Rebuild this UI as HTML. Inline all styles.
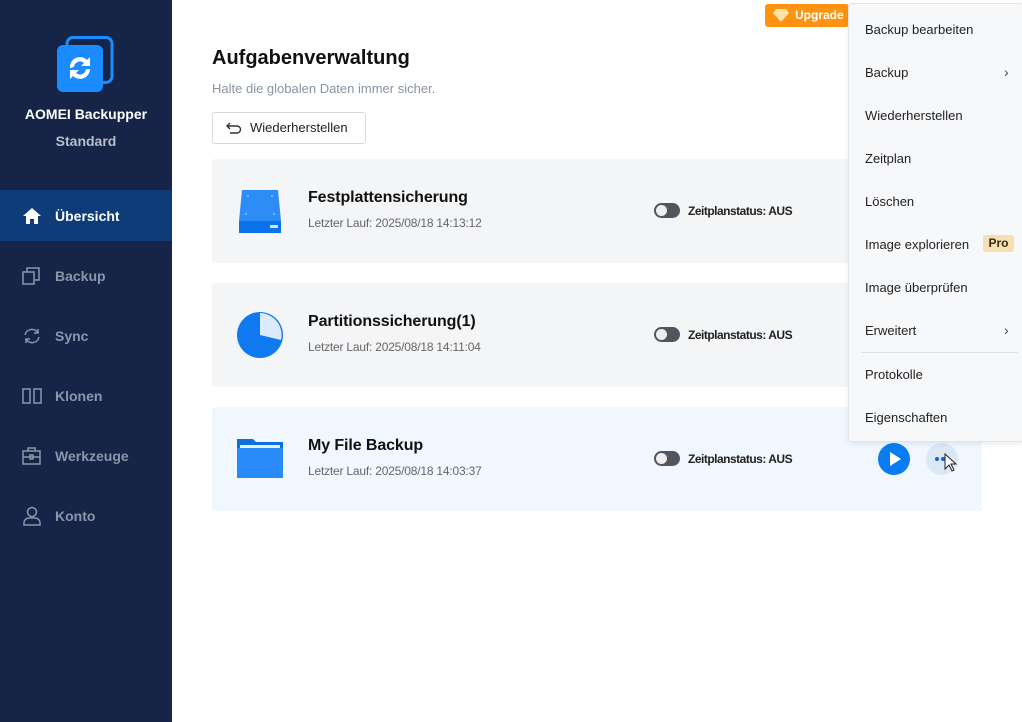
<!DOCTYPE html>
<html><head><meta charset="utf-8"><style>
*{margin:0;padding:0;box-sizing:border-box}
body{width:1022px;height:722px;overflow:hidden;background:#fff;font-family:"Liberation Sans",sans-serif;position:relative}
.side{position:absolute;left:0;top:0;width:172px;height:722px;background:#152447}
.brand{position:absolute;top:106px;width:172px;text-align:center;color:#fff;font-weight:bold;font-size:14px}
.std{position:absolute;top:133px;width:172px;text-align:center;color:#b7bfcc;font-weight:bold;font-size:14px}
.nav{position:absolute;left:0;width:172px;height:51px;color:#8a96ab;font-weight:bold;font-size:14px;display:flex;align-items:center}
.nav svg{position:absolute;left:22px}
.nav span{position:absolute;left:55px}
.nav.act{background:#0e3c78;color:#fff}
.card{position:absolute;left:212px;width:770px;height:104px;background:#f4f5f7;border-radius:3px}
.card .t{position:absolute;left:96px;top:30px;font-weight:bold;font-size:16px;color:#111;letter-spacing:-0.1px}
.card .s{position:absolute;left:96px;top:57px;font-size:12px;color:#666;letter-spacing:-0.2px}
.card .tg{position:absolute;left:442px;top:44px;width:26px;height:15px;border-radius:8px;background:#50555e}
.card .tg:after{content:"";position:absolute;left:2px;top:2px;width:11px;height:11px;border-radius:50%;background:#eee}
.card .z{position:absolute;left:476px;top:45px;font-size:12px;font-weight:bold;color:#222;letter-spacing:-0.5px}
.menu{position:absolute;left:848px;top:3px;width:176px;height:439px;background:#f7f8fa;border:1px solid #e2e4e8;border-radius:4px;box-shadow:0 2px 6px rgba(0,0,0,.08)}
.mi{position:absolute;left:16px;font-size:13px;color:#222;top:-1px}
.ch{position:absolute;left:155px;font-size:14px;color:#444}
</style></head><body>
<div class="side">
<svg style="position:absolute;left:56px;top:36px" width="58" height="58" viewBox="0 0 58 58"><rect x="11" y="1.5" width="45" height="45" rx="6" fill="none" stroke="#1a8cff" stroke-width="3"/><rect x="1" y="9" width="46" height="47" rx="6" fill="#1a8cff"/><path d="M14 32a10 10 0 0 1 17-8l3-3v9h-9l3-3a6 6 0 0 0-10 4z" fill="#fff"/><path d="M34 33a10 10 0 0 1-17 7l-3 3v-9h9l-3 3a6 6 0 0 0 10-4z" fill="#fff"/></svg>
<div class="brand">AOMEI Backupper</div><div class="std">Standard</div>
<div class="nav act" style="top:190px"><svg width="20" height="18" viewBox="0 0 20 18"><path d="M10 1L1 9h3v8h4v-5h4v5h4V9h3z" fill="#fff"/></svg><span>Übersicht</span></div>
<div class="nav" style="top:250px"><svg width="18" height="18" viewBox="0 0 18 18" fill="none" stroke="#8a96ab" stroke-width="1.5"><rect x="1" y="5" width="11" height="12"/><path d="M5 5V1h12v12h-5"/></svg><span>Backup</span></div>
<div class="nav" style="top:310px"><svg width="20" height="18" viewBox="0 0 20 18" fill="none" stroke="#8a96ab" stroke-width="1.5"><path d="M3 8a7 7 0 0 1 13-2M17 10a7 7 0 0 1-13 2"/><path d="M16 2v4h-4M4 16v-4h4"/></svg><span>Sync</span></div>
<div class="nav" style="top:370px"><svg width="20" height="18" viewBox="0 0 20 18" fill="none" stroke="#8a96ab" stroke-width="1.5"><rect x="1" y="2" width="7" height="14"/><rect x="12" y="2" width="7" height="14"/></svg><span>Klonen</span></div>
<div class="nav" style="top:430px"><svg width="20" height="18" viewBox="0 0 20 18" fill="none" stroke="#8a96ab" stroke-width="1.5"><rect x="1" y="4" width="17" height="13"/><path d="M6 4V1h7v3M1 10h17"/><rect x="8" y="8" width="3" height="4"/></svg><span>Werkzeuge</span></div>
<div class="nav" style="top:490px"><svg width="20" height="20" viewBox="0 0 20 20" fill="none" stroke="#8a96ab" stroke-width="1.5"><circle cx="10" cy="6" r="4.5"/><path d="M2 19v-2a5 5 0 0 1 5-5h6a5 5 0 0 1 5 5v2z"/></svg><span>Konto</span></div>
</div>
<div style="position:absolute;left:765px;top:4px;width:84px;height:23px;background:#ff9311;border-radius:3px;color:#fff;font-weight:bold;font-size:12px;line-height:23px;padding-left:30px">Upgrade<svg style="position:absolute;left:8px;top:5px" width="16" height="13" viewBox="0 0 16 13"><path d="M3 0h10l3 4-8 9-8-9z" fill="#ffe3a8"/></svg></div>
<div style="position:absolute;left:212px;top:47px;font-size:20px;font-weight:bold;color:#111">Aufgabenverwaltung</div>
<div style="position:absolute;left:212px;top:81px;font-size:13px;color:#8a93a3">Halte die globalen Daten immer sicher.</div>
<div style="position:absolute;left:212px;top:112px;width:154px;height:32px;border:1px solid #d5d8dd;border-radius:3px;font-size:13px;color:#222;line-height:30px;padding-left:37px">Wiederherstellen<svg style="position:absolute;left:13px;top:9px" width="16" height="12" viewBox="0 0 16 12" fill="none" stroke="#333" stroke-width="1.4"><path d="M4 1L1 4l3 3M1 4h10a3.5 3.5 0 0 1 0 7H4"/></svg></div>

<div class="card" style="top:159px"><svg style="position:absolute;left:26px;top:31px" width="44" height="43" viewBox="0 0 44 43"><path d="M4 0h36l3 31H1z" fill="#2d8cf5"/><rect x="1" y="31" width="42" height="12" fill="#0a72ea"/><rect x="32" y="35" width="8" height="3" fill="#cfe4ff"/><circle cx="10" cy="6" r="1" fill="#8fc2ff"/><circle cx="34" cy="6" r="1" fill="#8fc2ff"/><circle cx="8" cy="24" r="1" fill="#8fc2ff"/><circle cx="36" cy="24" r="1" fill="#8fc2ff"/></svg>
<div class="t">Festplattensicherung</div><div class="s">Letzter Lauf: 2025/08/18 14:13:12</div><div class="tg"></div><div class="z">Zeitplanstatus: AUS</div></div>
<div class="card" style="top:283px"><svg style="position:absolute;left:24px;top:28px" width="48" height="48" viewBox="0 0 48 48"><circle cx="24" cy="24" r="23" fill="#0f7af0"/><path d="M24 2a22 22 0 0 1 21 27L24 24z" fill="#dcebfb"/></svg>
<div class="t">Partitionssicherung(1)</div><div class="s">Letzter Lauf: 2025/08/18 14:11:04</div><div class="tg"></div><div class="z">Zeitplanstatus: AUS</div></div>
<div class="card" style="top:407px;background:#f0f7ff"><svg style="position:absolute;left:25px;top:32px" width="46" height="39" viewBox="0 0 46 39"><path d="M0 0h16l3 3h27v36H0z" fill="#0f6fe0"/><rect x="3" y="6" width="40" height="3" fill="#e5f0fd"/><rect x="0" y="9" width="46" height="30" fill="#2a8bf8"/></svg>
<div class="t">My File Backup</div><div class="s">Letzter Lauf: 2025/08/18 14:03:37</div><div class="tg"></div><div class="z">Zeitplanstatus: AUS</div>
<div style="position:absolute;left:666px;top:36px;width:32px;height:32px;border-radius:50%;background:#0a7cf2"><svg style="position:absolute;left:11px;top:9px" width="12" height="14" viewBox="0 0 12 14"><path d="M1 0l11 7-11 7z" fill="#fff"/></svg></div>
<div style="position:absolute;left:714px;top:36px;width:32px;height:32px;border-radius:50%;background:#dbe8f8"><span style="position:absolute;left:9px;top:14px;width:4px;height:4px;border-radius:50%;background:#1a5fd0"></span><span style="position:absolute;left:15px;top:14px;width:4px;height:4px;border-radius:50%;background:#1a5fd0"></span><svg style="position:absolute;left:18px;top:10px" width="14" height="20" viewBox="0 0 14 20"><path d="M1 1v15l4-4 3 6 2-1-3-6h5z" fill="#fff" stroke="#222" stroke-width="1"/></svg></div></div>

<div class="menu">
<div class="mi" style="top:18px">Backup bearbeiten</div>
<div class="mi" style="top:61px">Backup</div><div class="ch" style="top:60px">›</div>
<div class="mi" style="top:104px">Wiederherstellen</div>
<div class="mi" style="top:147px">Zeitplan</div>
<div class="mi" style="top:190px">Löschen</div>
<div class="mi" style="top:233px">Image explorieren</div><div style="position:absolute;left:134px;top:231px;width:31px;height:17px;background:#f5dfb5;border-radius:3px;font-size:12px;font-weight:bold;color:#3a2a10;text-align:center;line-height:17px">Pro</div>
<div class="mi" style="top:276px">Image überprüfen</div>
<div class="mi" style="top:319px">Erweitert</div><div class="ch" style="top:318px">›</div>
<div style="position:absolute;left:12px;top:348px;width:157px;height:1px;background:#dcdfe4"></div>
<div class="mi" style="top:363px">Protokolle</div>
<div class="mi" style="top:406px">Eigenschaften</div>
</div>
</body></html>
